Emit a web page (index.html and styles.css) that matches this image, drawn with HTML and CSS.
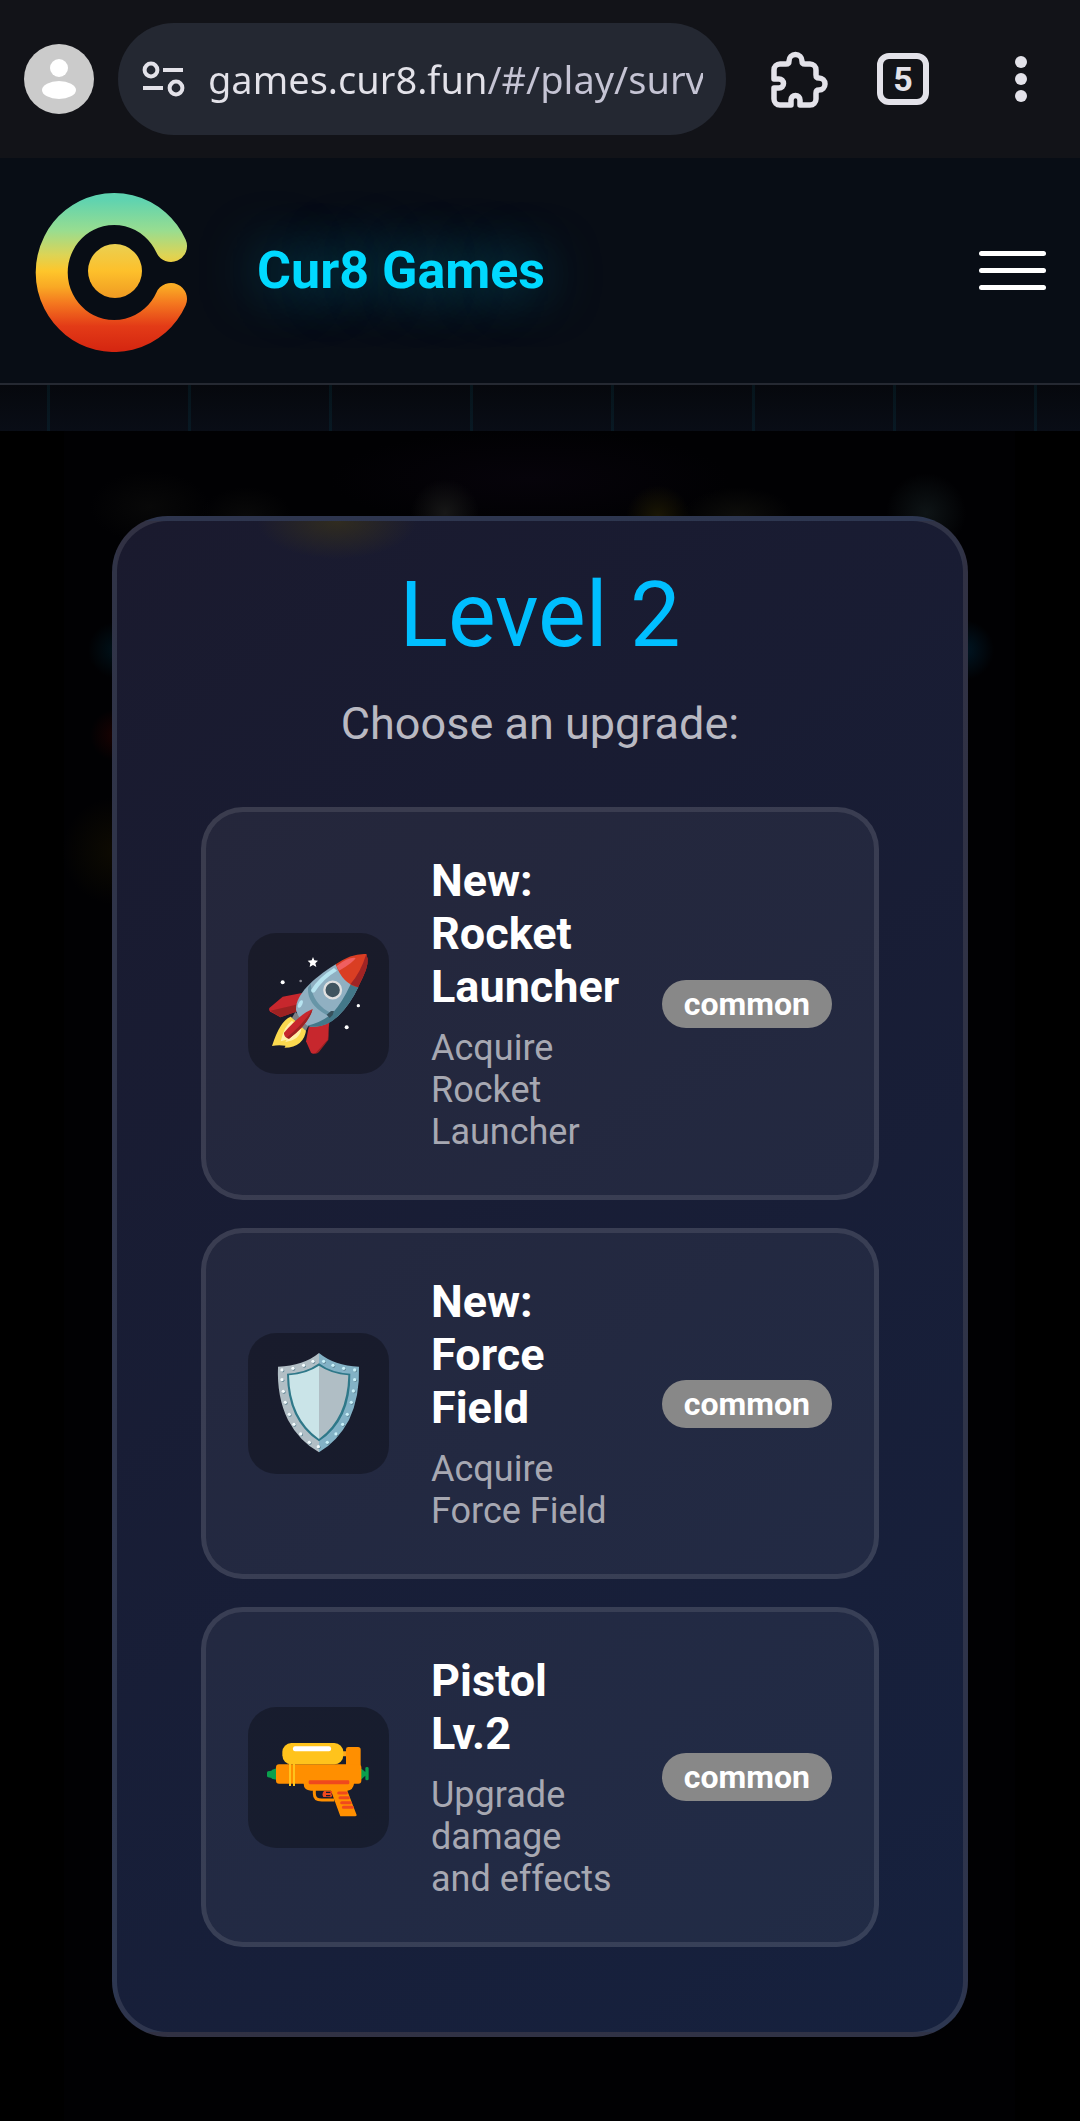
FILE: index.html
```html
<!DOCTYPE html>
<html lang="en">
<head>
    <meta charset="UTF-8">
    <meta name="viewport" content="width=device-width, initial-scale=1.0">
    <title>Cur8 Games</title>
    <link rel="stylesheet" href="styles.css">
</head>
<body>
    <div class="toolbar">
        <button class="avatar" aria-label="Profile">
            <svg width="70" height="70" viewBox="0 0 70 70">
                <circle cx="35" cy="35" r="35" fill="#cbcbcb"/>
                <circle cx="35" cy="24" r="9" fill="#fff"/>
                <ellipse cx="35" cy="46" rx="17" ry="9" fill="#fff"/>
            </svg>
        </button>
        <div class="omnibox">
            <svg width="43" height="38" viewBox="0 0 43 38" fill="none" stroke="#e3e2e9" stroke-width="4">
                <circle cx="9" cy="10" r="6.4"/>
                <path d="M21 10h20M1 28h20"/>
                <circle cx="34" cy="28" r="6.4"/>
            </svg>
            <input type="text" class="url" aria-label="Address" value="games.cur8.fun/#/play/survivor">
        </div>
        <div class="toolbar-actions">
            <button aria-label="Extensions">
                <svg width="57" height="57" viewBox="0 0 57 57" fill="none" stroke="#e3e2e9" stroke-width="5.5" stroke-linejoin="round">
                    <path d="M9 13h6q3 0 3-3a6.5 6.5 0 0 1 13 0q0 3 3 3h5a6 6 0 0 1 6 6v5q0 3 3 3a6 6 0 0 1 0 12q-3 0-3 3v6a6 6 0 0 1-6 6H29v-5a4.5 4.5 0 0 0-9 0v5H9a6 6 0 0 1-6-6V37h5a4.5 4.5 0 0 0 0-9H3v-9a6 6 0 0 1 6-6z"/>
                </svg>
            </button>
            <button class="tab-count" aria-label="Tabs">5</button>
            <button class="more" aria-label="More">
                <svg width="12" height="46" viewBox="0 0 12 46" fill="#e3e2e9">
                    <circle cx="6" cy="6" r="6"/>
                    <circle cx="6" cy="23" r="6"/>
                    <circle cx="6" cy="40" r="6"/>
                </svg>
            </button>
        </div>
    </div>

    <header class="header">
        <a href="#/" class="brand">
            <svg width="160" height="162" viewBox="0 0 160 162">
                <defs>
                    <linearGradient id="logoFill" gradientUnits="userSpaceOnUse" x1="0" y1="0" x2="0" y2="162">
                        <stop offset="0.06" stop-color="#5fd3b0"/>
                        <stop offset="0.25" stop-color="#98dd90"/>
                        <stop offset="0.4" stop-color="#dcd456"/>
                        <stop offset="0.5" stop-color="#fec62b"/>
                        <stop offset="0.6" stop-color="#f9a824"/>
                        <stop offset="0.7" stop-color="#f4771f"/>
                        <stop offset="0.84" stop-color="#e33b17"/>
                        <stop offset="1" stop-color="#d42510"/>
                    </linearGradient>
                    <linearGradient id="dotFill" x1="0" y1="0" x2="0" y2="1">
                        <stop offset="0" stop-color="#ead052"/>
                        <stop offset="0.5" stop-color="#fdc02b"/>
                        <stop offset="1" stop-color="#f09a22"/>
                    </linearGradient>
                </defs>
                <path d="M137 56A62.500 63.500 0 1 0 137 109" fill="none" stroke="url(#logoFill)" stroke-width="32" stroke-linecap="round"/>
                <circle cx="81" cy="81" r="27" fill="url(#dotFill)"/>
            </svg>
            <span class="brand-name">Cur8 Games</span>
        </a>
        <button class="menu-toggle" aria-label="Menu">
            <span></span>
            <span></span>
            <span></span>
        </button>
    </header>

    <div class="grid-strip"></div>

    <main class="stage">
        <section class="modal">
            <h1>Level 2</h1>
            <p class="subtitle">Choose an upgrade:</p>

            <div class="upgrades">
                <button class="upgrade">
                    <svg class="upgrade-icon" viewBox="24 39 423 423">
                        <path d="M219 111l4 10 11 1-8 8 3 11-10-6-10 6 2-11-8-8 12-1z" fill="#fff"/>
                        <circle cx="128" cy="187" r="6" fill="#fff"/>
                        <circle cx="182" cy="183" r="4" fill="#8a8a94"/>
                        <circle cx="355" cy="257" r="5" fill="#fff"/>
                        <circle cx="320" cy="322" r="6" fill="#fff"/>
                        <!-- fins -->
                        <path d="M190 218L128 230 88 264q-3 8 6 13l27 15 52-18z" fill="#c7272d"/>
                        <path d="M91 272l71-16 18-6-8 24-50 18z" fill="#9c2222"/>
                        <path d="M206 322l-8 42 15 34q6 6 17 1l34-40 4-60z" fill="#c7272d"/>
                        <path d="M268 299l-5 60-38 42q8 0 12-5l28-36z" fill="#9c2222"/>
                        <!-- flame -->
                        <path d="M152 290q-32 12-56 88 18-4 40-1 0 4-3 6 60-1 66-57z" fill="#fbd94f"/>
                        <path d="M156 302q-24 16-34 62l18-5-4 7q42-5 48-38z" fill="#fff0a8"/>
                        <path d="M166 276l41 39-10 17-41-39z" fill="#7d8084"/>
                        <!-- hull -->
                        <path d="M287 133C215 178 166 226 168 270q3 20 34 47 42 14 92-28 38-38 61-88z" fill="#90b0c2"/>
                        <path d="M355 201q-24 52-61 88-44 42-92 28 44-10 76-38 28-30 54-86z" fill="#437889"/>
                        <path d="M204 203q-3 50 56 82l18-4q-60-26-66-90z" fill="#6795a7"/>
                        <path d="M260 284l13-11 9 0-4 12-9 9z" fill="#37515c"/>
                        <path d="M282 144q-46 28-69 66 1 12 11 7 24-40 67-65z" fill="#b7e4f0"/>
                        <ellipse cx="181" cy="252" rx="6" ry="12" transform="rotate(25 181 252)" fill="#b7e4f0"/>
                        <!-- nose -->
                        <path d="M287 133q48-34 92-31 11 26-10 69l-15 31q-46-10-67-69z" fill="#da3e23"/>
                        <path d="M379 102q12 26-10 69l-15 31-23-9q31-36 48-91z" fill="#a02424"/>
                        <path d="M290 138q36-28 57-24-6 13-50 38z" fill="#ef5f60"/>
                        <circle cx="278" cy="210" r="25" fill="#40545f" stroke="#e0e0e0" stroke-width="7"/>
                        <path d="M218 267q-34 12-86 71-1 15 15 18 58-42 71-89z" fill="#c7272d"/>
                        <path d="M218 267q-10 42-71 89l-7-3q54-45 78-86z" fill="#9c2222"/>
                    </svg>
                    <span class="upgrade-info">
                        <span class="upgrade-name">New: Rocket Launcher</span>
                        <span class="upgrade-desc">Acquire Rocket Launcher</span>
                    </span>
                    <span class="rarity">common</span>
                </button>

                <button class="upgrade">
                    <svg class="upgrade-icon" viewBox="24 41 423 423">
                        <path d="M237 101q-46 38-123 41-4 90 30 160 34 64 93 97z" fill="#b1bec5"/>
                        <path d="M237 101q46 38 120 41 3 90-30 160-34 64-90 97z" fill="#83b2c6"/>
                        <path d="M237 132q-40 29-96 31 0 140 96 203 96-63 94-203-56-2-94-31z" fill="#2f7889"/>
                        <path d="M237 139q-37 25-90 29 3 130 90 191z" fill="#cae4e8"/>
                        <path d="M237 139q37 25 88 29-3 130-88 191z" fill="#b0bec5"/>
                        <g fill="#5c8191">
                            <circle cx="128" cy="154" r="5"/><circle cx="161" cy="149" r="5"/><circle cx="193" cy="140" r="5"/><circle cx="221" cy="128" r="5"/>
                            <circle cx="253" cy="128" r="5"/><circle cx="281" cy="140" r="5"/><circle cx="313" cy="149" r="5"/><circle cx="346" cy="154" r="5"/>
                            <circle cx="128" cy="183" r="5"/><circle cx="132" cy="218" r="5"/><circle cx="138" cy="251" r="5"/><circle cx="150" cy="287" r="5"/>
                            <circle cx="164" cy="317" r="5"/><circle cx="184" cy="346" r="5"/><circle cx="210" cy="371" r="5"/><circle cx="237" cy="384" r="5"/>
                            <circle cx="346" cy="183" r="5"/><circle cx="342" cy="217" r="5"/><circle cx="336" cy="251" r="5"/><circle cx="324" cy="287" r="5"/>
                            <circle cx="310" cy="317" r="5"/><circle cx="290" cy="346" r="5"/><circle cx="264" cy="371" r="5"/>
                        </g>
                        <g fill="#f2fafc">
                            <circle cx="126" cy="152" r="5"/><circle cx="159" cy="147" r="5"/><circle cx="191" cy="138" r="5"/><circle cx="219" cy="126" r="5"/>
                            <circle cx="126" cy="181" r="5"/><circle cx="130" cy="216" r="5"/><circle cx="136" cy="249" r="5"/><circle cx="148" cy="285" r="5"/>
                            <circle cx="162" cy="315" r="5"/><circle cx="182" cy="344" r="5"/><circle cx="208" cy="369" r="5"/><circle cx="235" cy="382" r="5"/>
                        </g>
                        <g fill="#c8f0f8">
                            <circle cx="251" cy="126" r="5"/><circle cx="279" cy="138" r="5"/><circle cx="311" cy="147" r="5"/><circle cx="344" cy="152" r="5"/>
                            <circle cx="344" cy="181" r="5"/><circle cx="340" cy="215" r="5"/><circle cx="334" cy="249" r="5"/><circle cx="322" cy="285" r="5"/>
                            <circle cx="308" cy="315" r="5"/><circle cx="288" cy="344" r="5"/><circle cx="262" cy="369" r="5"/>
                        </g>
                    </svg>
                    <span class="upgrade-info">
                        <span class="upgrade-name">New: Force Field</span>
                        <span class="upgrade-desc">Acquire Force Field</span>
                    </span>
                    <span class="rarity">common</span>
                </button>

                <button class="upgrade">
                    <svg class="upgrade-icon" viewBox="24 23 423 423">
                        <path d="M109 207L95 212v2l-11 2q-3 1-3 4v10q0 3 3 4l11 2v2l14 3z" fill="#0aa04d"/>
                        <path d="M361 205l15 13v-11q0-4 5-4t5 4v32q0 4-5 4t-5-4v-10l-15 14z" fill="#0aa04d"/>
                        <path d="M300 156h24v15h-24z" fill="#fba51a"/>
                        <path d="M318 200v-50q0-7 7-7h29q8 0 8 8v47z" fill="#ff8f00"/>
                        <rect x="108" y="195" width="256" height="58" rx="9" fill="#ff8f00"/>
                        <path d="M191 245h151v8q-2 18-20 21l28 73q0 4-5 4h-44l-28-77h-60q-22-2-22-21z" fill="#ff8f00"/>
                        <rect x="127" y="131" width="183" height="64" rx="27" fill="#ffc31c"/>
                        <rect x="159" y="141" width="114" height="15" rx="6" fill="#fff"/>
                        <path d="M150 193v67M162 193v67" stroke="#ffc31c" stroke-width="6"/>
                        <rect x="206" y="243" width="122" height="12" rx="4" fill="#f0491d"/>
                        <path d="M223 272v11q0 19 22 19h38" fill="none" stroke="#ff8f00" stroke-width="9"/>
                        <path d="M252 275q-8 10-2 18h10l14 1q5-6 0-10 5-4 1-9z" fill="#f0491d"/>
                        <path d="M258 277h13v4h-13zM258 287h13v4h-13z" fill="#1b1d2d"/>
                        <path d="M296 281h23M300 295h25M305 310h26M310 324h27" stroke="#f0491d" stroke-width="9" stroke-linecap="round"/>
                    </svg>
                    <span class="upgrade-info">
                        <span class="upgrade-name">Pistol Lv.2</span>
                        <span class="upgrade-desc">Upgrade damage and effects</span>
                    </span>
                    <span class="rarity">common</span>
                </button>
            </div>
        </section>
    </main>
</body>
</html>
```

FILE: styles.css
```css
* {
    box-sizing: border-box;
}

body {
    margin: 0;
    min-height: 100vh;
    display: flex;
    flex-direction: column;
    background-color: #000;
    color: #fff;
    font-family: Roboto, "Liberation Sans", sans-serif;
}

button {
    padding: 0;
    border: none;
    background: none;
    color: inherit;
    font-family: inherit;
    cursor: pointer;
}

svg {
    display: block;
    flex-shrink: 0;
}

/* browser bar */
.toolbar {
    display: flex;
    align-items: center;
    gap: 24px;
    height: 158px;
    padding: 0 16px 0 24px;
    background-color: #121318;
}

.omnibox {
    flex: 1;
    min-width: 0;
    display: flex;
    align-items: center;
    gap: 23px;
    height: 112px;
    padding: 0 23px 0 24px;
    border-radius: 56px;
    background-color: #242832;
}

.url {
    flex: 1;
    min-width: 0;
    height: 64px;
    padding: 0;
    border: none;
    outline: none;
    font-family: "Noto Sans", sans-serif;
    font-size: 38px;
    color: transparent;
    /* host is brighter than the path */
    background: linear-gradient(90deg, #e3e2e9 278px, #c5c4d4 278px);
    -webkit-background-clip: text;
    background-clip: text;
}

.toolbar-actions {
    display: flex;
    align-items: center;
    gap: 49px;
    margin-left: 21px;
}

.tab-count {
    width: 52px;
    height: 52px;
    border: 6px solid #e3e2e9;
    border-radius: 12px;
    font-size: 34px;
    line-height: 40px;
    font-weight: bold;
    color: #e3e2e9;
}

.more {
    width: 86px;
    height: 86px;
    display: flex;
    align-items: center;
    justify-content: center;
}

/* site header */
.header {
    display: flex;
    align-items: center;
    justify-content: space-between;
    height: 227px;
    padding: 0 34px;
    border-bottom: 2px solid #252932;
    background-color: #080d15;
}

.brand {
    display: flex;
    align-items: center;
    gap: 63px;
    color: #00d9ff;
    text-decoration: none;
}

.brand-name {
    font-size: 52px;
    font-weight: bold;
    text-shadow: 0 0 56px rgba(0, 217, 255, 0.5);
}

.menu-toggle {
    display: flex;
    flex-direction: column;
    gap: 12px;
}

.menu-toggle span {
    width: 67px;
    height: 5px;
    border-radius: 3px;
    background-color: #fff;
}

.grid-strip {
    height: 46px;
    background:
        repeating-linear-gradient(90deg, transparent 0 47px, rgba(0, 217, 255, 0.06) 47px 50px, transparent 50px 141px),
        linear-gradient(#06080d, #090d16);
}

/* dimmed game behind the dialog */
.stage {
    flex: 1;
    padding: 85px 112px 84px;
    background:
        radial-gradient(circle at 445px 82px, #171717, transparent 34px),
        radial-gradient(circle at 658px 86px, #1b1704, transparent 32px),
        radial-gradient(circle at 926px 82px, #0e1416, transparent 40px),
        radial-gradient(ellipse 60px 36px at 150px 76px, #080808, transparent),
        radial-gradient(ellipse 46px 30px at 246px 86px, #090909, transparent),
        radial-gradient(ellipse 56px 30px at 738px 86px, #0e0e0b, transparent),
        radial-gradient(ellipse 200px 50px at 530px 48px, #06030a, transparent),
        radial-gradient(circle at 116px 219px, #00121a, transparent 28px),
        radial-gradient(circle at 964px 219px, #001624, transparent 30px),
        radial-gradient(circle at 116px 304px, #1a0202, transparent 26px),
        radial-gradient(circle at 116px 420px, #0e0b02, transparent 54px),
        linear-gradient(90deg, #000 64px, #010103 64px calc(100% - 65px), #000 calc(100% - 65px));
}

.modal {
    padding: 42px 84px 85px;
    border: 5px solid rgba(255, 255, 255, 0.1);
    border-radius: 56px;
    background:
        radial-gradient(ellipse 80px 38px at 220px 0, rgba(90, 76, 0, 0.35), transparent) no-repeat,
        linear-gradient(145deg, #1a1a2e, #16213e);
    text-align: center;
}

h1 {
    margin: 0 0 28px;
    font-size: 90px;
    line-height: 106px;
    font-weight: normal;
    color: #00bfff;
}

.subtitle {
    margin: 0 0 57px;
    font-size: 45px;
    line-height: 53px;
    color: #b9b9c2;
}

.upgrades {
    display: flex;
    flex-direction: column;
    gap: 28px;
}

.upgrade {
    display: flex;
    align-items: center;
    gap: 42px;
    width: 100%;
    padding: 42px;
    border: 5px solid rgba(255, 255, 255, 0.1);
    border-radius: 42px;
    background-color: rgba(255, 255, 255, 0.05);
    text-align: left;
}

.upgrade-icon {
    width: 141px;
    height: 141px;
    border-radius: 28px;
    background-color: rgba(0, 0, 0, 0.3);
}

.upgrade-info {
    flex: 1;
    min-width: 0;
}

.upgrade-name,
.upgrade-desc {
    display: block;
}

.upgrade-name {
    margin-bottom: 14px;
    font-size: 45px;
    line-height: 53px;
    font-weight: bold;
}

.upgrade-desc {
    font-size: 36px;
    line-height: 42px;
    color: #a7a8b2;
}

.rarity {
    padding: 6px 22px;
    border-radius: 28px;
    background-color: #888;
    font-size: 32px;
    line-height: 36px;
    font-weight: bold;
}
```
